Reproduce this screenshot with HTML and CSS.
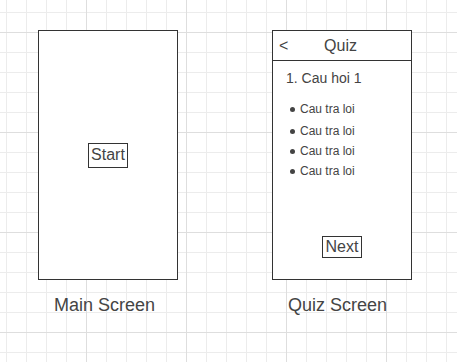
FILE: index.html
```html
<!doctype html>
<html lang="en">
<head>
  <meta charset="utf-8">
  <title>Quiz App Wireframe</title>
  <link rel="stylesheet" href="styles.css">
</head>
<body>
  <main class="canvas">
    <section class="screen">
      <div class="frame main-frame">
        <button class="btn start-btn">Start</button>
      </div>
      <p class="label">Main Screen</p>
    </section>

    <section class="screen">
      <div class="frame quiz-frame">
        <header class="quiz-header">
          <span class="back">&lt;</span>
          <span class="title">Quiz</span>
          <span></span>
        </header>
        <div class="quiz-body">
          <p class="question">1. Cau hoi 1</p>
          <ul class="answers">
            <li class="first">Cau tra loi</li>
            <li>Cau tra loi</li>
            <li>Cau tra loi</li>
            <li>Cau tra loi</li>
          </ul>
          <button class="btn next-btn">Next</button>
        </div>
      </div>
      <p class="label">Quiz Screen</p>
    </section>
  </main>
</body>
</html>
```

FILE: styles.css
```css
html, body {
  margin: 0;
  height: 100%;
}
body {
  background-color: #fff;
  background-image:
    linear-gradient(to right, #dedede 1px, transparent 1px),
    linear-gradient(to bottom, #dedede 1px, transparent 1px),
    linear-gradient(to right, #ececec 1px, transparent 1px),
    linear-gradient(to bottom, #ececec 1px, transparent 1px);
  background-size: 100px 100px, 100px 100px, 20px 20px, 20px 20px;
  background-position: 86px 0, 0 32px, 6px 0, 0 12px;
  color: #444;
  font-family: "Liberation Sans", Arial, sans-serif;
}
.canvas {
  display: flex;
  gap: 94px;
  padding: 30px 0 0 38px;
}
.screen {
  display: flex;
  flex-direction: column;
  width: 140px;
}
.frame {
  box-sizing: border-box;
  width: 140px;
  height: 250px;
  background: #fff;
  border: 1px solid #333;
}
.main-frame {
  display: flex;
  align-items: center;
  justify-content: center;
}
.label {
  margin: 15px 0 0;
  padding-left: 16px;
  font-size: 18px;
  line-height: 21px;
}
.btn {
  box-sizing: border-box;
  width: 40px;
  padding: 0;
  background: #fff;
  border: 1px solid #333;
  border-radius: 0;
  color: #444;
  font-family: inherit;
  font-size: 16px;
}
.start-btn {
  height: 25px;
}
.next-btn {
  height: 22px;
  margin: auto auto 0;
  line-height: 20px;
}
.quiz-frame {
  display: flex;
  flex-direction: column;
}
.quiz-header {
  display: grid;
  grid-template-columns: 1fr auto 1fr;
  height: 29px;
  border-bottom: 1px solid #333;
  font-size: 16px;
  line-height: 29px;
}
.back {
  padding-left: 6px;
}
.title {
  margin-right: 3px;
}
.quiz-body {
  display: flex;
  flex: 1;
  flex-direction: column;
  padding: 7px 0 21px;
}
.question {
  margin: 0;
  padding-left: 13px;
  font-size: 14px;
  line-height: 20px;
}
.answers {
  list-style: none;
  margin: 11px 0 0;
  padding: 0 0 0 17px;
  font-size: 12px;
  line-height: 20px;
}
.answers li {
  display: flex;
  align-items: center;
  gap: 5px;
}
.answers li::before {
  content: "";
  width: 5px;
  height: 5px;
  border-radius: 50%;
  background: #444;
}
.answers .first {
  margin-bottom: 2px;
}
```
